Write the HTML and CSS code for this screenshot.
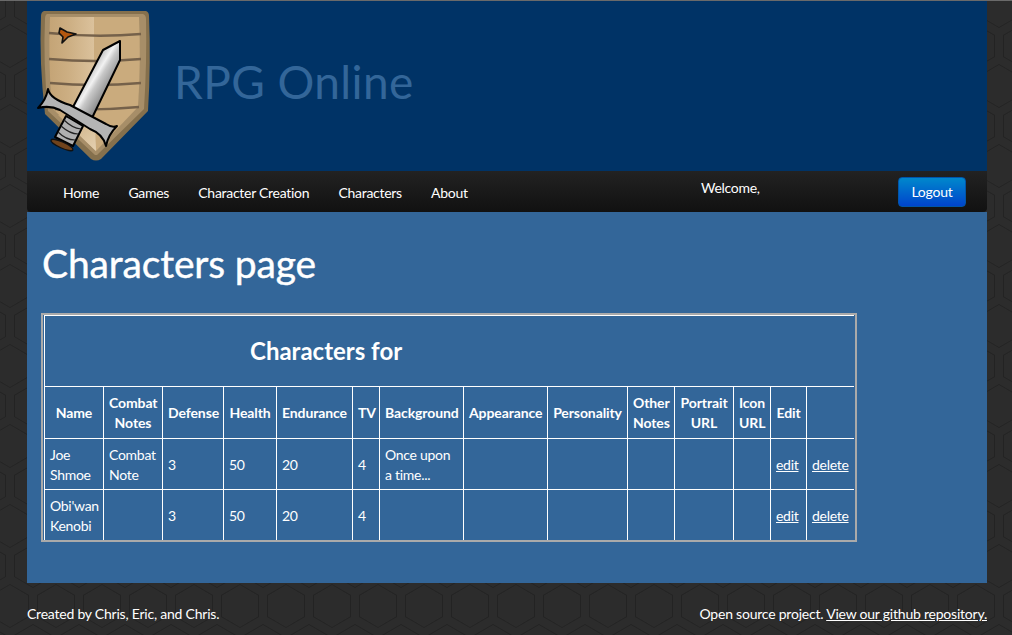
FILE: index.html
```html
<!DOCTYPE html>
<html lang="en">
<head>
<meta charset="utf-8">
<title>RPG Online</title>
<link rel="stylesheet" href="styles.css">
</head>
<body>
<div class="wrap">
  <header class="banner">
    <svg class="logo" viewBox="30 5 130 162" width="130" height="162" aria-hidden="true">
      <defs>
        <linearGradient id="panelL" x1="0" y1="0" x2="1" y2="0">
          <stop offset="0" stop-color="#c4a476"/><stop offset="0.4" stop-color="#ccae82"/><stop offset="1" stop-color="#dcc39e"/>
        </linearGradient>
        <linearGradient id="panelB" x1="0" y1="0" x2="1" y2="1">
          <stop offset="0" stop-color="#c8a879"/><stop offset="1" stop-color="#e4d0b0"/>
        </linearGradient>
        <linearGradient id="blade" x1="0" y1="0" x2="1" y2="1">
          <stop offset="0.3" stop-color="#9a9a9a"/><stop offset="0.47" stop-color="#f2f2f2"/><stop offset="0.53" stop-color="#c8c8c8"/><stop offset="0.68" stop-color="#8f8f8f"/>
        </linearGradient>
      </defs>
      <path class="s-outer" d="M44 11 L146 11 Q149 12 149 16 Q151 62 148 111 L101 159 Q96 162 91 159 L45 114 Q39 62 41 16 Q41 12 44 11 Z"/>
      <path class="s-ring" d="M47 14 L143 14 Q146 15 146 19 Q147 62 144 109 L97 155 L95 155 L48 111 Q43 62 45 19 Q45 15 47 14 Z"/>
      <path d="M50 17 L94 17 L94 120 L96 151 L52 108 Q48 62 50 17 Z" fill="url(#panelL)"/>
      <path class="s-right" d="M94 17 L139 17 Q141 62 138 107 L96 151 L94 120 Z"/>
      <path d="M58 115 L95 122 L96 151 Z" fill="url(#panelB)"/>
      <path class="plank" d="M49 33 Q95 38 141 34"/>
      <path class="plank" d="M49 59 Q95 63 141 59"/>
      <path class="plank" d="M50 83 Q95 87 141 83"/>
      <path class="plank" d="M55 109 Q95 111 139 107"/>
      <path class="star" d="M60 28 L67 32 L76 34 L68 37 L62 43 L63 37 L59 33 Z"/>
      <path class="metal" d="M120 41 L103 50 L73 107 L92 118 L120 60 Z" fill="url(#blade)"/>
      <path class="metal grip" d="M66 116 L83 126 L73 146 L55 137 Z"/>
      <path class="band" d="M61 126 Q70 134 78 134 M58 132 Q66 140 75 140 M64 120 Q72 128 81 129"/>
      <path class="metal guard" d="M48 89 Q50 99 70 105 L106 124 Q112 128 117 126 Q108 135 106 146 Q103 134 90 129 L60 110 Q50 105 38 108 Q46 100 48 89 Z"/>
      <ellipse class="pommel" cx="62" cy="145" rx="12" ry="3" transform="rotate(24 62 145)"/>
    </svg>
    <div class="brand">RPG Online</div>
  </header>
  <nav class="navbar">
    <ul class="menu">
      <li><a href="#">Home</a></li>
      <li><a href="#">Games</a></li>
      <li><a href="#">Character Creation</a></li>
      <li><a href="#">Characters</a></li>
      <li><a href="#">About</a></li>
    </ul>
    <span class="welcome">Welcome,</span>
    <button class="logout" type="button">Logout</button>
  </nav>
  <main class="content">
    <h1>Characters page</h1>
    <table class="sheet">
      <colgroup>
        <col class="c1"><col class="c2"><col class="c3"><col class="c4"><col class="c5"><col class="c6"><col class="c7"><col class="c8"><col class="c9"><col class="c10"><col class="c11"><col class="c12"><col class="c13"><col class="c14">
      </colgroup>
      <thead>
        <tr class="title-row"><th colspan="14">Characters for</th></tr>
        <tr class="head-row">
          <th>Name</th><th>Combat Notes</th><th>Defense</th><th>Health</th><th>Endurance</th><th>TV</th><th>Background</th><th>Appearance</th><th>Personality</th><th>Other Notes</th><th>Portrait URL</th><th>Icon URL</th><th>Edit</th><th></th>
        </tr>
      </thead>
      <tbody>
        <tr>
          <td>Joe Shmoe</td><td>Combat Note</td><td>3</td><td>50</td><td>20</td><td>4</td><td>Once upon a time...</td><td></td><td></td><td></td><td></td><td></td><td><a href="#">edit</a></td><td><a href="#">delete</a></td>
        </tr>
        <tr>
          <td>Obi'wan Kenobi</td><td></td><td>3</td><td>50</td><td>20</td><td>4</td><td></td><td></td><td></td><td></td><td></td><td></td><td><a href="#">edit</a></td><td><a href="#">delete</a></td>
        </tr>
      </tbody>
    </table>
  </main>
  <footer class="foot">
    <span>Created by Chris, Eric, and Chris.</span>
    <span>Open source project. <a href="#">View our github repository.</a></span>
  </footer>
</div>
</body>
</html>
```
FILE: styles.css
```css
* { box-sizing: border-box; }
html, body { height: 100%; }
body {
  margin: 0;
  border-top: 1px solid #6a6a6a;
  color: #fff;
  font-family: "Lato", "Noto Sans", sans-serif;
  font-size: 14px;
  line-height: 20px;
  letter-spacing: -0.22px;
  background-color: #2c2c2c;
  background-position: 10px 6px;
  background-image: url("data:image/svg+xml,%3Csvg xmlns='http://www.w3.org/2000/svg' width='46' height='80'%3E%3Cg fill='none' stroke-linejoin='miter'%3E%3Cpath stroke='%23232323' stroke-width='10' d='M0 13.3 L23 26.7 L46 13.3 M23 26.7 V53.3 M-23 53.3 L0 66.7 L23 53.3 L46 66.7 L69 53.3 M0 66.7 V93 M46 66.7 V93 M0 -13 V13.3 M46 -13 V13.3'/%3E%3Cpath stroke='%232c2c2c' stroke-width='8' d='M0 13.3 L23 26.7 L46 13.3 M23 26.7 V53.3 M-23 53.3 L0 66.7 L23 53.3 L46 66.7 L69 53.3 M0 66.7 V93 M46 66.7 V93 M0 -13 V13.3 M46 -13 V13.3'/%3E%3C/g%3E%3C/svg%3E");
}
.wrap { width: 960px; margin-left: 27px; }
a { color: #fff; }

.banner {
  height: 170px;
  background: #003366;
  display: flex;
  align-items: flex-start;
  padding: 4px 0 0 3px;
}
.logo { flex: none; display: block; }
.brand {
  margin: 49px 0 0 14px;
  font-size: 46px;
  line-height: 56px;
  color: #336699;
  letter-spacing: 0.4px;
  white-space: nowrap;
}
.s-outer { fill: #85704d; }
.s-ring { fill: #a78e68; }
.s-right { fill: #caab7d; }
.plank { fill: none; stroke: #75614a; stroke-width: 2.4; }
.star { fill: #b4570f; stroke: #111; stroke-width: 1.6; stroke-linejoin: round; }
.metal { stroke: #000; stroke-width: 2; stroke-linejoin: round; }
.grip { fill: #b0b0b0; }
.guard { fill: #b4b4b4; }
.band { fill: none; stroke: #222; stroke-width: 1.2; }
.pommel { fill: #70431c; stroke: #111; stroke-width: 1.3; }

.navbar {
  height: 41px;
  display: flex;
  align-items: flex-start;
  background: linear-gradient(#222222, #111111);
  border-radius: 0 0 4px 4px;
  padding-left: 21.4px;
}
.menu {
  list-style: none;
  margin: 0;
  padding: 0;
  display: flex;
  width: 652.6px;
  flex: none;
  letter-spacing: -0.28px;
}
.menu a {
  display: block;
  padding: 12px 14.6px 9px;
  text-decoration: none;
  white-space: nowrap;
}
.welcome { margin-top: 7px; flex: none; width: 197px; letter-spacing: -0.28px; }
.logout {
  margin-top: 6px;
  width: 68px;
  height: 30px;
  padding: 0;
  border: 1px solid #0055aa;
  border-radius: 4px;
  color: #fff;
  font: inherit;
  letter-spacing: inherit;
  background: linear-gradient(#0088cc, #0044cc);
}

.content {
  height: 371px;
  background: #336699;
  padding: 15px;
}
h1 {
  margin: 10px 0 24px;
  font-size: 39px;
  line-height: 52px;
  font-weight: 400;
  letter-spacing: -0.15px;
  -webkit-text-stroke: 0.4px #fff;
}
.sheet {
  width: 816px;
  table-layout: fixed;
  border-collapse: separate;
  border-spacing: 0;
  border: 2px solid #aaaaaa;
  padding: 0 1px;
  margin-left: -1px;
}
.sheet th, .sheet td {
  border-top: 1px solid #fff;
  border-left: 1px solid #fff;
  padding: 5px;
  vertical-align: middle;
  font-size: 14px;
  letter-spacing: -0.1px;
}
.sheet th { text-align: center; font-weight: 700; }
.sheet td { text-align: left; padding: 6px 5px 4px; letter-spacing: -0.28px; }
.title-row { height: 71px; }
.sheet .title-row th { font-size: 24px; font-weight: 700; letter-spacing: 0; padding-right: 252px; }
.head-row { height: 52px; }
.sheet tbody tr { height: 51px; }
.c1 { width: 59px; }
.c2 { width: 59px; }
.c3 { width: 61px; }
.c4 { width: 53px; }
.c5 { width: 76px; }
.c6 { width: 27px; }
.c7 { width: 84px; }
.c8 { width: 84px; }
.c9 { width: 80px; }
.c10 { width: 47px; }
.c11 { width: 59px; }
.c12 { width: 37px; }
.c13 { width: 36px; }
.c14 { width: 48px; }

.foot {
  display: flex;
  justify-content: space-between;
  padding-top: 21px;
}
```
